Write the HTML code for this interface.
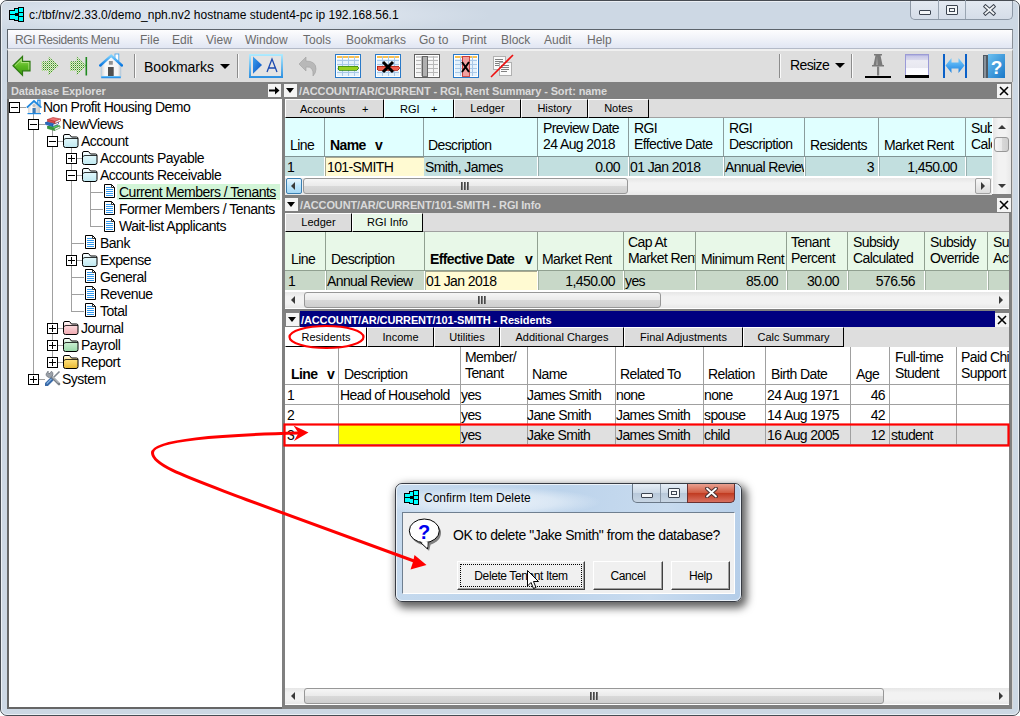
<!DOCTYPE html><html><head><meta charset="utf-8"><style>
*{box-sizing:border-box;margin:0;padding:0}
html,body{width:1020px;height:716px;overflow:hidden;background:#fff}
body{position:relative;font-family:"Liberation Sans",sans-serif;white-space:nowrap}
.a{position:absolute}
.t{position:absolute;line-height:1}
.btn{position:absolute;width:14px;height:14px;background:#f4f4f4}
.dd{position:absolute;left:3px;top:5px;width:0;height:0;border-left:4px solid transparent;border-right:4px solid transparent;border-top:5px solid #000}
.ptitle{position:absolute;font:bold 11px "Liberation Sans";letter-spacing:-0.12px;color:#dadada;line-height:12px}
.tab{position:absolute;height:19px;background:#dcdcdc;border-top:1px solid #fff;border-left:1px solid #fff;border-right:1px solid #000;border-bottom:1px solid #000;font-size:11px;line-height:17px;text-align:center;color:#000}
.g{position:absolute;font-size:14px;letter-spacing:-0.6px;line-height:16px;color:#000}
.tr{position:absolute;font-size:14px;letter-spacing:-0.5px;line-height:16px;color:#000}
.mn{position:absolute;font-size:12px;letter-spacing:-0.4px;line-height:14px;color:#6b6b6b;top:33px}
.ln{position:absolute;background:#a0a0a0}
</style></head><body>
<div class="a" style="left:0;top:0;width:1020px;height:716px;background:#cdd8e4;border:1px solid #474c53;border-radius:7px 7px 7px 7px"></div>
<div class="a" style="left:1px;top:1px;width:560px;height:28px;border-radius:6px 0 0 0;background:radial-gradient(ellipse 280px 22px at 210px 14px,#dde5ee 0,#dae2ec 60%,rgba(205,216,228,0) 100%)"></div>
<div class="a" style="left:1px;top:1px;width:1018px;height:714px;border:1px solid rgba(255,255,255,0.6);border-radius:6px"></div>
<svg class="a" style="left:9px;top:7px" width="15" height="15" viewBox="0 0 15 15" shape-rendering="crispEdges">
<rect x="0" y="3" width="15" height="10" fill="#000"/><rect x="5" y="1" width="10" height="13" fill="#000"/><rect x="9" y="0" width="6" height="15" fill="#000"/>
<rect x="1" y="4" width="5" height="3" fill="#0ff"/><rect x="1" y="8" width="5" height="4" fill="#0ff"/>
<rect x="6" y="2" width="3" height="4" fill="#0ff"/><rect x="6" y="9" width="3" height="4" fill="#0ff"/>
<rect x="10" y="1" width="4" height="4" fill="#0ff"/><rect x="10" y="6" width="4" height="3" fill="#0ff"/><rect x="10" y="10" width="4" height="4" fill="#0ff"/>
</svg>
<div class="t" style="left:29px;top:8px;font-size:12px;color:#000;line-height:14px">c:/tbf/nv/2.33.0/demo_nph.nv2 hostname student4-pc ip 192.168.56.1</div>
<div class="a" style="left:910px;top:1px;width:103px;height:19px;border:1px solid #8d98a6;border-top:none;border-radius:0 0 5px 5px;background:linear-gradient(#e3e9f1,#d5dde8)"></div>
<div class="a" style="left:938px;top:0;width:1px;height:19px;background:#9aa5b2"></div>
<div class="a" style="left:965px;top:0;width:1px;height:19px;background:#9aa5b2"></div>
<div class="a" style="left:919px;top:10px;width:12px;height:5px;background:#f4f6f8;border:1px solid #3c4450;border-radius:1px"></div>
<div class="a" style="left:946px;top:5px;width:12px;height:10px;background:#f4f6f8;border:1px solid #3c4450;border-radius:1px"></div>
<div class="a" style="left:949px;top:8px;width:6px;height:4px;border:1px solid #3c4450"></div>
<svg class="a" style="left:983px;top:4px" width="13" height="12" viewBox="0 0 13 12"><path d="M2.5,2.5 L10.5,9.5 M10.5,2.5 L2.5,9.5" stroke="#3c4450" stroke-width="3.8" stroke-linecap="square"/><path d="M2.5,2.5 L10.5,9.5 M10.5,2.5 L2.5,9.5" stroke="#f4f6f8" stroke-width="1.8" stroke-linecap="square"/></svg>
<div class="a" style="left:7px;top:29px;width:1006px;height:20px;border-top:1px solid #5c636b;border-left:1px solid #5c636b;border-right:1px solid #8a9098;background:linear-gradient(#fdfdfe,#f1f3f9 45%,#e1e6f3);border-bottom:1px solid #b4bac8"></div>
<div class="mn" style="left:15px;letter-spacing:-0.4px">RGI Residents Menu</div>
<div class="mn" style="left:140px;letter-spacing:0px">File</div>
<div class="mn" style="left:172px;letter-spacing:0px">Edit</div>
<div class="mn" style="left:206px;letter-spacing:0px">View</div>
<div class="mn" style="left:245px;letter-spacing:0px">Window</div>
<div class="mn" style="left:303px;letter-spacing:0px">Tools</div>
<div class="mn" style="left:346px;letter-spacing:0px">Bookmarks</div>
<div class="mn" style="left:419px;letter-spacing:0px">Go to</div>
<div class="mn" style="left:462px;letter-spacing:0px">Print</div>
<div class="mn" style="left:501px;letter-spacing:0px">Block</div>
<div class="mn" style="left:544px;letter-spacing:0px">Audit</div>
<div class="mn" style="left:587px;letter-spacing:0px">Help</div>
<div class="a" style="left:7px;top:49px;width:1006px;height:33px;background:#dedede;border-top:2px solid #f0f0f0;border-left:1px solid #5c636b;border-right:1px solid #a0a0a0"></div>
<div class="a" style="left:134px;top:54px;width:2px;height:24px;border-left:1px solid #8c8c8c;border-right:1px solid #fafafa"></div>
<div class="a" style="left:237px;top:54px;width:2px;height:24px;border-left:1px solid #8c8c8c;border-right:1px solid #fafafa"></div>
<div class="a" style="left:779px;top:54px;width:2px;height:24px;border-left:1px solid #8c8c8c;border-right:1px solid #fafafa"></div>
<div class="a" style="left:851px;top:54px;width:2px;height:24px;border-left:1px solid #8c8c8c;border-right:1px solid #fafafa"></div>
<div class="t" style="left:144px;top:59px;font-size:14px;line-height:16px;color:#000">Bookmarks</div>
<div class="a" style="left:220px;top:64px;width:0;height:0;border-left:5px solid transparent;border-right:5px solid transparent;border-top:5px solid #000"></div>
<div class="t" style="left:790px;top:57px;font-size:14px;letter-spacing:-0.6px;line-height:16px;color:#000">Resize</div>
<div class="a" style="left:835px;top:63px;width:0;height:0;border-left:5px solid transparent;border-right:5px solid transparent;border-top:5px solid #000"></div>
<svg class="a" style="left:12px;top:55px" width="20" height="22" viewBox="0 0 20 22"><defs><linearGradient id="gr1" x1="0" y1="0" x2="0" y2="1"><stop offset="0" stop-color="#a8e070"/><stop offset="0.5" stop-color="#5cba22"/><stop offset="1" stop-color="#3c9810"/></linearGradient></defs><path d="M1,10.7 L10.5,1.5 V6.3 H18 V15.8 H10.5 V20.2 Z" fill="url(#gr1)" stroke="#2d7a12" stroke-width="1.2" stroke-linejoin="miter"/><path d="M3,10.7 L9.3,4.5 V7.5 H16.8 V14.6" fill="none" stroke="#c8f0a0" stroke-width="0.8" opacity="0.8"/></svg>
<svg class="a" style="left:41px;top:55px" width="20" height="22" viewBox="0 0 20 22"><defs><pattern id="dot" width="2" height="2" patternUnits="userSpaceOnUse"><rect width="1" height="1" fill="#3a9a18"/><rect x="1" y="1" width="1" height="1" fill="#98d868"/></pattern></defs><path d="M0.8,6.3 H7.4 V1.5 L18,10.7 L7.4,20.2 V15.8 H0.8 Z" fill="url(#dot)"/></svg>
<svg class="a" style="left:69px;top:55px" width="20" height="22" viewBox="0 0 20 22"><path d="M1,6.3 H7.7 V1.5 L17,10.7 L7.7,20.2 V15.8 H1 Z" fill="url(#dot)"/><rect x="16.5" y="2" width="1.6" height="18.5" fill="#1f8a1f"/></svg>
<svg class="a" style="left:99px;top:53px" width="24" height="26" viewBox="0 0 24 26"><defs><linearGradient id="hw" x1="0" y1="0" x2="1" y2="0"><stop offset="0" stop-color="#d0d0d0"/><stop offset="0.2" stop-color="#f8f8f8"/><stop offset="0.85" stop-color="#f4f4f4"/><stop offset="1" stop-color="#c8c8c8"/></linearGradient><linearGradient id="hr" x1="0" y1="0" x2="0" y2="1"><stop offset="0" stop-color="#7ad0ff"/><stop offset="1" stop-color="#0a78e0"/></linearGradient></defs><rect x="16" y="1" width="3.8" height="7" fill="#fff" stroke="#3aa0f0" stroke-width="0.8"/><path d="M2.2,12 L12.2,3.5 L21.8,12 V24 H2.2 Z" fill="url(#hw)" stroke="#a0c8e8" stroke-width="0.6"/><rect x="9.9" y="8" width="3.9" height="3.7" fill="#909090"/><rect x="9" y="14" width="5.7" height="9.5" fill="#505050"/><rect x="2.2" y="23" width="19.6" height="2.2" fill="url(#hr)"/><path d="M1.2,12.5 L12.2,2.6 L23,12.5" fill="none" stroke="url(#hr)" stroke-width="2.4" stroke-linecap="round" stroke-linejoin="round"/></svg>
<svg class="a" style="left:249px;top:54px" width="34" height="24" viewBox="0 0 34 24"><defs><linearGradient id="pab" x1="0" y1="0" x2="0" y2="1"><stop offset="0" stop-color="#b0ecff"/><stop offset="1" stop-color="#2a8ee0"/></linearGradient><linearGradient id="pat" x1="0" y1="0" x2="1" y2="1"><stop offset="0" stop-color="#3aa0f0"/><stop offset="1" stop-color="#0a50c0"/></linearGradient></defs><rect x="0" y="0" width="34" height="24" fill="url(#pab)"/><rect x="2" y="2" width="30" height="20" fill="#e4e4e4"/><path d="M4,2.6 L13,11 L4,19.8 Z" fill="url(#pat)"/><path d="M18,18 L23,5 L28,18 M19.6,14 H26.4" fill="none" stroke="#1a4ab0" stroke-width="1.3"/></svg>
<svg class="a" style="left:298px;top:56px" width="20" height="21" viewBox="0 0 20 21"><path d="M1,8 L8,1 V5 Q18,5 18,13 Q18,17 15,20 Q16,10 8,11 V15 Z" fill="#b8b8b8" stroke="#a0a0a0" stroke-width="0.6"/></svg>
<svg class="a" style="left:335px;top:54px" width="26" height="24" viewBox="0 0 26 24" shape-rendering="crispEdges"><rect x="0.5" y="0.5" width="25" height="23" fill="#fff" stroke="#2a7ac8"/><rect x="2" y="5" width="22" height="17" fill="#e4f2fc"/><rect x="2" y="2" width="22" height="2" fill="#f8c050"/><rect x="2" y="6" width="22" height="1" fill="#a8c8e8"/><rect x="2" y="10" width="22" height="1" fill="#a8c8e8"/><rect x="2" y="14" width="22" height="1" fill="#a8c8e8"/><rect x="2" y="18" width="22" height="1" fill="#a8c8e8"/><rect x="7" y="2" width="1" height="20" fill="#a8c8e8"/><rect x="13" y="2" width="1" height="20" fill="#a8c8e8"/><rect x="19" y="2" width="1" height="20" fill="#a8c8e8"/><rect x="3" y="12" width="20" height="4" rx="1" fill="#98d020" stroke="#3a8a10" stroke-width="0.8"/></svg>
<svg class="a" style="left:375px;top:54px" width="26" height="24" viewBox="0 0 26 24" shape-rendering="crispEdges"><rect x="0.5" y="0.5" width="25" height="23" fill="#fff" stroke="#2a7ac8"/><rect x="2" y="5" width="22" height="17" fill="#e4f2fc"/><rect x="2" y="2" width="22" height="2" fill="#f8c050"/><rect x="2" y="6" width="22" height="1" fill="#a8c8e8"/><rect x="2" y="10" width="22" height="1" fill="#a8c8e8"/><rect x="2" y="14" width="22" height="1" fill="#a8c8e8"/><rect x="2" y="18" width="22" height="1" fill="#a8c8e8"/><rect x="7" y="2" width="1" height="20" fill="#a8c8e8"/><rect x="13" y="2" width="1" height="20" fill="#a8c8e8"/><rect x="19" y="2" width="1" height="20" fill="#a8c8e8"/><rect x="2" y="12" width="22" height="4" rx="1" fill="#f06050" stroke="#b02010" stroke-width="0.8"/><path d="M8,8 L18,18 M18,8 L8,18" stroke="#000" stroke-width="3" shape-rendering="auto"/></svg>
<svg class="a" style="left:414px;top:54px" width="26" height="24" viewBox="0 0 26 24" shape-rendering="crispEdges"><rect x="0.5" y="0.5" width="25" height="23" fill="#fff" stroke="#606060"/><rect x="2" y="5" width="22" height="17" fill="#f4f4f4"/><rect x="2" y="2" width="22" height="2" fill="#d0d0d0"/><rect x="2" y="6" width="22" height="1" fill="#b8b8b8"/><rect x="2" y="10" width="22" height="1" fill="#b8b8b8"/><rect x="2" y="14" width="22" height="1" fill="#b8b8b8"/><rect x="2" y="18" width="22" height="1" fill="#b8b8b8"/><rect x="7" y="2" width="1" height="20" fill="#b8b8b8"/><rect x="13" y="2" width="1" height="20" fill="#b8b8b8"/><rect x="19" y="2" width="1" height="20" fill="#b8b8b8"/><rect x="8" y="2" width="5" height="20" fill="#b0b0b0" stroke="#505050" stroke-width="0.8"/></svg>
<svg class="a" style="left:453px;top:54px" width="26" height="24" viewBox="0 0 26 24" shape-rendering="crispEdges"><rect x="0.5" y="0.5" width="25" height="23" fill="#fff" stroke="#2a7ac8"/><rect x="2" y="5" width="22" height="17" fill="#e4f2fc"/><rect x="2" y="2" width="22" height="2" fill="#f8c050"/><rect x="2" y="6" width="22" height="1" fill="#a8c8e8"/><rect x="2" y="10" width="22" height="1" fill="#a8c8e8"/><rect x="2" y="14" width="22" height="1" fill="#a8c8e8"/><rect x="2" y="18" width="22" height="1" fill="#a8c8e8"/><rect x="7" y="2" width="1" height="20" fill="#a8c8e8"/><rect x="13" y="2" width="1" height="20" fill="#a8c8e8"/><rect x="19" y="2" width="1" height="20" fill="#a8c8e8"/><rect x="9" y="2" width="7" height="20" fill="#f0a0a0" stroke="#c02020" stroke-width="0.8"/><path d="M9,8 L16,18 M16,8 L9,18" stroke="#000" stroke-width="2" shape-rendering="auto"/></svg>
<svg class="a" style="left:490px;top:54px" width="25" height="24" viewBox="0 0 25 24" shape-rendering="crispEdges"><rect x="3.5" y="2.5" width="12" height="13" fill="#fafafa" stroke="#b0b0b0"/><path d="M5,5.5 H13 M5,7.5 H13 M5,9.5 H13 M5,11.5 H11" stroke="#808080"/><rect x="9.5" y="8.5" width="12" height="13" fill="#fafafa" stroke="#b0b0b0"/><path d="M11,11.5 H19 M11,13.5 H19 M11,15.5 H19 M11,17.5 H17" stroke="#808080"/><path d="M1,23 L23,1" stroke="#ee1010" stroke-width="1.6" shape-rendering="auto"/></svg>
<svg class="a" style="left:865px;top:54px" width="26" height="24" viewBox="0 0 26 24"><path d="M9,0 H17 V1.5 H15.5 L17.5,11 H19 V12.5 H7 V11 H8.5 L10.5,1.5 H9 Z" fill="#7a7a7a"/><path d="M12,2 L11,11 H13 Z" fill="#a0a0a0"/><rect x="12" y="12.5" width="2.2" height="9" fill="#808080"/><rect x="0" y="22" width="26" height="2" fill="#000"/></svg>
<svg class="a" style="left:905px;top:54px" width="24" height="24" viewBox="0 0 24 24"><defs><linearGradient id="wg" x1="0" y1="0" x2="0" y2="1"><stop offset="0" stop-color="#8e8ed0"/><stop offset="0.1" stop-color="#c8c8e8"/><stop offset="0.25" stop-color="#d8d8ec"/><stop offset="0.3" stop-color="#ececf4"/><stop offset="0.62" stop-color="#e8e8f0"/><stop offset="0.66" stop-color="#fafaff"/><stop offset="1" stop-color="#ffffff"/></linearGradient></defs><rect x="0" y="0" width="24" height="22" fill="url(#wg)"/><rect x="0" y="0" width="1" height="22" fill="#9a9ad8"/><rect x="23" y="0" width="1" height="22" fill="#9a9ad8"/><rect x="0" y="21" width="24" height="3" fill="#000"/></svg>
<svg class="a" style="left:943px;top:54px" width="25" height="24" viewBox="0 0 25 24"><defs><linearGradient id="ag" x1="0" y1="0" x2="0" y2="1"><stop offset="0" stop-color="#7cd0ff"/><stop offset="1" stop-color="#1a80e0"/></linearGradient></defs><rect x="0" y="0" width="2" height="24" fill="#0a60c8"/><rect x="22" y="0" width="2" height="24" fill="#0a60c8"/><path d="M2.5,11.5 L8.5,4 V8.5 H15.5 V4 L21.5,11.5 L15.5,19 V14.5 H8.5 V19 Z" fill="url(#ag)"/></svg>
<svg class="a" style="left:983px;top:54px" width="22" height="24" viewBox="0 0 22 24"><defs><linearGradient id="bg" x1="0" y1="0" x2="1" y2="1"><stop offset="0" stop-color="#6cc0f0"/><stop offset="1" stop-color="#1a78c8"/></linearGradient></defs><rect x="0" y="1" width="5" height="23" fill="#505a64"/><rect x="1.5" y="2" width="1" height="22" fill="#c0c8d0"/><rect x="5" y="0" width="17" height="24" fill="url(#bg)"/><text x="13.5" y="20" font-family="Liberation Sans" font-weight="bold" font-size="19" fill="#fff" text-anchor="middle">?</text></svg>
<div class="a" style="left:7px;top:82px;width:276px;height:17px;background:#808080"></div>
<div class="ptitle" style="left:11px;top:85px">Database Explorer</div>
<div class="btn" style="left:268px;top:84px;width:13px;height:13px"></div>
<svg class="a" style="left:269px;top:86px" width="11" height="9" viewBox="0 0 11 9"><path d="M0,3.5 H6 V0.5 L10.5,4.5 L6,8.5 V5.5 H0 Z" fill="#000"/></svg>
<div class="a" style="left:7px;top:99px;width:276px;height:610px;background:#fff;border-left:2px solid #666;border-bottom:2px solid #666"></div>
<div class="ln" style="left:33px;top:113px;width:1px;height:266px"></div>
<div class="ln" style="left:52px;top:130px;width:1px;height:232px"></div>
<div class="ln" style="left:71px;top:147px;width:1px;height:164px"></div>
<div class="ln" style="left:90px;top:181px;width:1px;height:45px"></div>
<div class="ln" style="left:20px;top:107px;width:6px;height:1px"></div>
<div class="a" style="left:9px;top:102px;width:11px;height:11px;border:1px solid #000;background:#fff"></div><div class="a" style="left:11px;top:107px;width:7px;height:1px;background:#000"></div>
<svg class="a" style="left:26px;top:99px" width="17" height="16" viewBox="0 0 17 16"><defs><linearGradient id="hwl" x1="0" y1="0" x2="1" y2="0"><stop offset="0" stop-color="#d8d8d8"/><stop offset="0.3" stop-color="#fafafa"/><stop offset="1" stop-color="#c8c8c8"/></linearGradient></defs><path d="M2,8 L8,3 L14,8 V14.5 H2 Z" fill="url(#hwl)"/><circle cx="8" cy="6.5" r="1.6" fill="#c0c0c0"/><rect x="6.5" y="9" width="3.2" height="5.5" fill="#3a7ab8"/><rect x="1.5" y="14" width="13.5" height="1.2" fill="#1e88e0"/><path d="M0.8,8.6 L8,2 L15.4,8.6" fill="none" stroke="#1e88e0" stroke-width="1.8"/><path d="M11.8,5 V1.2 H14 V7" fill="none" stroke="#1e88e0" stroke-width="1.2"/></svg>
<div class="tr" style="left:43px;top:99px">Non Profit Housing Demo</div>
<div class="ln" style="left:39px;top:124px;width:6px;height:1px"></div>
<div class="a" style="left:28px;top:119px;width:11px;height:11px;border:1px solid #000;background:#fff"></div><div class="a" style="left:30px;top:124px;width:7px;height:1px;background:#000"></div>
<svg class="a" style="left:45px;top:117px" width="16" height="14" viewBox="0 0 16 14"><path d="M2.5,9.5 L8,7.5 L15,9 L9.5,11.5 Z" fill="#58c860" stroke="#2a7a2a" stroke-width="0.6"/><path d="M2.5,9.5 L9.5,11.5 V13.5 L2.5,11.5 Z" fill="#38a040" stroke="#2a7a2a" stroke-width="0.6"/><path d="M9.5,11.5 L15,9 V11 L9.5,13.5 Z" fill="#fff" stroke="#2a7a2a" stroke-width="0.6"/><path d="M0.5,5.5 L6,3.5 L13.5,5 L8,7.5 Z" fill="#3a88e0" stroke="#1a50a0" stroke-width="0.6"/><path d="M0.5,5.5 L8,7.5 V9.5 L0.5,7.5 Z" fill="#2a70c8" stroke="#1a50a0" stroke-width="0.6"/><path d="M8,7.5 L13.5,5 V7 L8,9.5 Z" fill="#fff" stroke="#1a50a0" stroke-width="0.6"/><path d="M2.5,2.5 L8,0.5 L15.5,2 L10,4.5 Z" fill="#f07070" stroke="#b03030" stroke-width="0.6"/><path d="M2.5,2.5 L10,4.5 V6.5 L2.5,4.5 Z" fill="#e05050" stroke="#b03030" stroke-width="0.6"/><path d="M10,4.5 L15.5,2 V4 L10,6.5 Z" fill="#fff" stroke="#b03030" stroke-width="0.6"/></svg>
<div class="tr" style="left:62px;top:116px">NewViews</div>
<div class="ln" style="left:58px;top:141px;width:6px;height:1px"></div>
<div class="a" style="left:47px;top:136px;width:11px;height:11px;border:1px solid #000;background:#fff"></div><div class="a" style="left:49px;top:141px;width:7px;height:1px;background:#000"></div>
<svg class="a" style="left:63px;top:134px" width="16" height="14" viewBox="0 0 16 14"><defs><linearGradient id="fgdff7fb" x1="0" y1="0" x2="0" y2="1"><stop offset="0" stop-color="#fff"/><stop offset="0.35" stop-color="#dff7fb"/><stop offset="1" stop-color="#bfe8f0"/></linearGradient></defs><path d="M0.5,11.5 V2 Q0.5,0.5 2,0.5 H6.5 L8.5,3 H13.5 Q15,3 15,4.5 V11.5 Q15,13.5 13,13.5 H2.5 Q0.5,13.5 0.5,11.5 Z" fill="url(#fgdff7fb)" stroke="#000" stroke-width="1"/><path d="M1,5.5 Q2,4.5 3,4.5 H15" fill="none" stroke="#000" stroke-width="0.8"/></svg>
<div class="tr" style="left:81px;top:133px">Account</div>
<div class="ln" style="left:77px;top:158px;width:6px;height:1px"></div>
<div class="a" style="left:66px;top:153px;width:11px;height:11px;border:1px solid #000;background:#fff"></div><div class="a" style="left:68px;top:158px;width:7px;height:1px;background:#000"></div><div class="a" style="left:71px;top:155px;width:1px;height:7px;background:#000"></div>
<svg class="a" style="left:82px;top:151px" width="16" height="14" viewBox="0 0 16 14"><defs><linearGradient id="fgdff7fb" x1="0" y1="0" x2="0" y2="1"><stop offset="0" stop-color="#fff"/><stop offset="0.35" stop-color="#dff7fb"/><stop offset="1" stop-color="#bfe8f0"/></linearGradient></defs><path d="M0.5,11.5 V2 Q0.5,0.5 2,0.5 H6.5 L8.5,3 H13.5 Q15,3 15,4.5 V11.5 Q15,13.5 13,13.5 H2.5 Q0.5,13.5 0.5,11.5 Z" fill="url(#fgdff7fb)" stroke="#000" stroke-width="1"/><path d="M1,5.5 Q2,4.5 3,4.5 H15" fill="none" stroke="#000" stroke-width="0.8"/></svg>
<div class="tr" style="left:100px;top:150px">Accounts Payable</div>
<div class="ln" style="left:77px;top:175px;width:6px;height:1px"></div>
<div class="a" style="left:66px;top:170px;width:11px;height:11px;border:1px solid #000;background:#fff"></div><div class="a" style="left:68px;top:175px;width:7px;height:1px;background:#000"></div>
<svg class="a" style="left:82px;top:168px" width="16" height="14" viewBox="0 0 16 14"><defs><linearGradient id="fgdff7fb" x1="0" y1="0" x2="0" y2="1"><stop offset="0" stop-color="#fff"/><stop offset="0.35" stop-color="#dff7fb"/><stop offset="1" stop-color="#bfe8f0"/></linearGradient></defs><path d="M0.5,11.5 V2 Q0.5,0.5 2,0.5 H6.5 L8.5,3 H13.5 Q15,3 15,4.5 V11.5 Q15,13.5 13,13.5 H2.5 Q0.5,13.5 0.5,11.5 Z" fill="url(#fgdff7fb)" stroke="#000" stroke-width="1"/><path d="M1,5.5 Q2,4.5 3,4.5 H15" fill="none" stroke="#000" stroke-width="0.8"/></svg>
<div class="tr" style="left:100px;top:167px">Accounts Receivable</div>
<div class="ln" style="left:90px;top:192px;width:13px;height:1px"></div>
<div class="a" style="left:117px;top:184px;width:163px;height:16px;background:#d2f5d7"></div>
<svg class="a" style="left:104px;top:184px" width="11" height="14" viewBox="0 0 11 14"><path d="M0.5,0.5 H7.5 L10.5,3.5 V13.5 H0.5 Z" fill="#fff" stroke="#000"/><path d="M7.5,0.5 V3.5 H10.5" fill="none" stroke="#000" stroke-width="0.8"/><rect x="2" y="3" width="5" height="1" fill="#3399ee"/><rect x="2" y="5" width="7" height="1" fill="#3399ee"/><rect x="2" y="7" width="7" height="1" fill="#3399ee"/><rect x="2" y="9" width="7" height="1" fill="#3399ee"/><rect x="2" y="11" width="7" height="1" fill="#3399ee"/></svg>
<div class="tr" style="left:119px;top:184px;text-decoration:underline">Current Members / Tenants</div>
<div class="ln" style="left:90px;top:209px;width:13px;height:1px"></div>
<svg class="a" style="left:104px;top:201px" width="11" height="14" viewBox="0 0 11 14"><path d="M0.5,0.5 H7.5 L10.5,3.5 V13.5 H0.5 Z" fill="#fff" stroke="#000"/><path d="M7.5,0.5 V3.5 H10.5" fill="none" stroke="#000" stroke-width="0.8"/><rect x="2" y="3" width="5" height="1" fill="#3399ee"/><rect x="2" y="5" width="7" height="1" fill="#3399ee"/><rect x="2" y="7" width="7" height="1" fill="#3399ee"/><rect x="2" y="9" width="7" height="1" fill="#3399ee"/><rect x="2" y="11" width="7" height="1" fill="#3399ee"/></svg>
<div class="tr" style="left:119px;top:201px">Former Members / Tenants</div>
<div class="ln" style="left:90px;top:226px;width:13px;height:1px"></div>
<svg class="a" style="left:104px;top:218px" width="11" height="14" viewBox="0 0 11 14"><path d="M0.5,0.5 H7.5 L10.5,3.5 V13.5 H0.5 Z" fill="#fff" stroke="#000"/><path d="M7.5,0.5 V3.5 H10.5" fill="none" stroke="#000" stroke-width="0.8"/><rect x="2" y="3" width="5" height="1" fill="#3399ee"/><rect x="2" y="5" width="7" height="1" fill="#3399ee"/><rect x="2" y="7" width="7" height="1" fill="#3399ee"/><rect x="2" y="9" width="7" height="1" fill="#3399ee"/><rect x="2" y="11" width="7" height="1" fill="#3399ee"/></svg>
<div class="tr" style="left:119px;top:218px">Wait-list Applicants</div>
<div class="ln" style="left:71px;top:243px;width:13px;height:1px"></div>
<svg class="a" style="left:85px;top:235px" width="11" height="14" viewBox="0 0 11 14"><path d="M0.5,0.5 H7.5 L10.5,3.5 V13.5 H0.5 Z" fill="#fff" stroke="#000"/><path d="M7.5,0.5 V3.5 H10.5" fill="none" stroke="#000" stroke-width="0.8"/><rect x="2" y="3" width="5" height="1" fill="#3399ee"/><rect x="2" y="5" width="7" height="1" fill="#3399ee"/><rect x="2" y="7" width="7" height="1" fill="#3399ee"/><rect x="2" y="9" width="7" height="1" fill="#3399ee"/><rect x="2" y="11" width="7" height="1" fill="#3399ee"/></svg>
<div class="tr" style="left:100px;top:235px">Bank</div>
<div class="ln" style="left:77px;top:260px;width:6px;height:1px"></div>
<div class="a" style="left:66px;top:255px;width:11px;height:11px;border:1px solid #000;background:#fff"></div><div class="a" style="left:68px;top:260px;width:7px;height:1px;background:#000"></div><div class="a" style="left:71px;top:257px;width:1px;height:7px;background:#000"></div>
<svg class="a" style="left:82px;top:253px" width="16" height="14" viewBox="0 0 16 14"><defs><linearGradient id="fgdff7fb" x1="0" y1="0" x2="0" y2="1"><stop offset="0" stop-color="#fff"/><stop offset="0.35" stop-color="#dff7fb"/><stop offset="1" stop-color="#bfe8f0"/></linearGradient></defs><path d="M0.5,11.5 V2 Q0.5,0.5 2,0.5 H6.5 L8.5,3 H13.5 Q15,3 15,4.5 V11.5 Q15,13.5 13,13.5 H2.5 Q0.5,13.5 0.5,11.5 Z" fill="url(#fgdff7fb)" stroke="#000" stroke-width="1"/><path d="M1,5.5 Q2,4.5 3,4.5 H15" fill="none" stroke="#000" stroke-width="0.8"/></svg>
<div class="tr" style="left:100px;top:252px">Expense</div>
<div class="ln" style="left:71px;top:277px;width:13px;height:1px"></div>
<svg class="a" style="left:85px;top:269px" width="11" height="14" viewBox="0 0 11 14"><path d="M0.5,0.5 H7.5 L10.5,3.5 V13.5 H0.5 Z" fill="#fff" stroke="#000"/><path d="M7.5,0.5 V3.5 H10.5" fill="none" stroke="#000" stroke-width="0.8"/><rect x="2" y="3" width="5" height="1" fill="#3399ee"/><rect x="2" y="5" width="7" height="1" fill="#3399ee"/><rect x="2" y="7" width="7" height="1" fill="#3399ee"/><rect x="2" y="9" width="7" height="1" fill="#3399ee"/><rect x="2" y="11" width="7" height="1" fill="#3399ee"/></svg>
<div class="tr" style="left:100px;top:269px">General</div>
<div class="ln" style="left:71px;top:294px;width:13px;height:1px"></div>
<svg class="a" style="left:85px;top:286px" width="11" height="14" viewBox="0 0 11 14"><path d="M0.5,0.5 H7.5 L10.5,3.5 V13.5 H0.5 Z" fill="#fff" stroke="#000"/><path d="M7.5,0.5 V3.5 H10.5" fill="none" stroke="#000" stroke-width="0.8"/><rect x="2" y="3" width="5" height="1" fill="#3399ee"/><rect x="2" y="5" width="7" height="1" fill="#3399ee"/><rect x="2" y="7" width="7" height="1" fill="#3399ee"/><rect x="2" y="9" width="7" height="1" fill="#3399ee"/><rect x="2" y="11" width="7" height="1" fill="#3399ee"/></svg>
<div class="tr" style="left:100px;top:286px">Revenue</div>
<div class="ln" style="left:71px;top:311px;width:13px;height:1px"></div>
<svg class="a" style="left:85px;top:303px" width="11" height="14" viewBox="0 0 11 14"><path d="M0.5,0.5 H7.5 L10.5,3.5 V13.5 H0.5 Z" fill="#fff" stroke="#000"/><path d="M7.5,0.5 V3.5 H10.5" fill="none" stroke="#000" stroke-width="0.8"/><rect x="2" y="3" width="5" height="1" fill="#3399ee"/><rect x="2" y="5" width="7" height="1" fill="#3399ee"/><rect x="2" y="7" width="7" height="1" fill="#3399ee"/><rect x="2" y="9" width="7" height="1" fill="#3399ee"/><rect x="2" y="11" width="7" height="1" fill="#3399ee"/></svg>
<div class="tr" style="left:100px;top:303px">Total</div>
<div class="ln" style="left:58px;top:328px;width:6px;height:1px"></div>
<div class="a" style="left:47px;top:323px;width:11px;height:11px;border:1px solid #000;background:#fff"></div><div class="a" style="left:49px;top:328px;width:7px;height:1px;background:#000"></div><div class="a" style="left:52px;top:325px;width:1px;height:7px;background:#000"></div>
<svg class="a" style="left:63px;top:321px" width="16" height="14" viewBox="0 0 16 14"><defs><linearGradient id="fgfbd7da" x1="0" y1="0" x2="0" y2="1"><stop offset="0" stop-color="#fff"/><stop offset="0.35" stop-color="#fbd7da"/><stop offset="1" stop-color="#f0a8b0"/></linearGradient></defs><path d="M0.5,11.5 V2 Q0.5,0.5 2,0.5 H6.5 L8.5,3 H13.5 Q15,3 15,4.5 V11.5 Q15,13.5 13,13.5 H2.5 Q0.5,13.5 0.5,11.5 Z" fill="url(#fgfbd7da)" stroke="#000" stroke-width="1"/><path d="M1,5.5 Q2,4.5 3,4.5 H15" fill="none" stroke="#000" stroke-width="0.8"/></svg>
<div class="tr" style="left:81px;top:320px">Journal</div>
<div class="ln" style="left:58px;top:345px;width:6px;height:1px"></div>
<div class="a" style="left:47px;top:340px;width:11px;height:11px;border:1px solid #000;background:#fff"></div><div class="a" style="left:49px;top:345px;width:7px;height:1px;background:#000"></div><div class="a" style="left:52px;top:342px;width:1px;height:7px;background:#000"></div>
<svg class="a" style="left:63px;top:338px" width="16" height="14" viewBox="0 0 16 14"><defs><linearGradient id="fgc8efd0" x1="0" y1="0" x2="0" y2="1"><stop offset="0" stop-color="#fff"/><stop offset="0.35" stop-color="#c8efd0"/><stop offset="1" stop-color="#98d8a8"/></linearGradient></defs><path d="M0.5,11.5 V2 Q0.5,0.5 2,0.5 H6.5 L8.5,3 H13.5 Q15,3 15,4.5 V11.5 Q15,13.5 13,13.5 H2.5 Q0.5,13.5 0.5,11.5 Z" fill="url(#fgc8efd0)" stroke="#000" stroke-width="1"/><path d="M1,5.5 Q2,4.5 3,4.5 H15" fill="none" stroke="#000" stroke-width="0.8"/></svg>
<div class="tr" style="left:81px;top:337px">Payroll</div>
<div class="ln" style="left:58px;top:362px;width:6px;height:1px"></div>
<div class="a" style="left:47px;top:357px;width:11px;height:11px;border:1px solid #000;background:#fff"></div><div class="a" style="left:49px;top:362px;width:7px;height:1px;background:#000"></div><div class="a" style="left:52px;top:359px;width:1px;height:7px;background:#000"></div>
<svg class="a" style="left:63px;top:355px" width="16" height="14" viewBox="0 0 16 14"><defs><linearGradient id="fgffe07a" x1="0" y1="0" x2="0" y2="1"><stop offset="0" stop-color="#fff"/><stop offset="0.35" stop-color="#ffe07a"/><stop offset="1" stop-color="#e8b830"/></linearGradient></defs><path d="M0.5,11.5 V2 Q0.5,0.5 2,0.5 H6.5 L8.5,3 H13.5 Q15,3 15,4.5 V11.5 Q15,13.5 13,13.5 H2.5 Q0.5,13.5 0.5,11.5 Z" fill="url(#fgffe07a)" stroke="#000" stroke-width="1"/><path d="M1,5.5 Q2,4.5 3,4.5 H15" fill="none" stroke="#000" stroke-width="0.8"/></svg>
<div class="tr" style="left:81px;top:354px">Report</div>
<div class="ln" style="left:39px;top:379px;width:6px;height:1px"></div>
<div class="a" style="left:28px;top:374px;width:11px;height:11px;border:1px solid #000;background:#fff"></div><div class="a" style="left:30px;top:379px;width:7px;height:1px;background:#000"></div><div class="a" style="left:33px;top:376px;width:1px;height:7px;background:#000"></div>
<svg class="a" style="left:45px;top:370px" width="16" height="16" viewBox="0 0 16 16"><path d="M9,7 L14.5,1.5" stroke="#808890" stroke-width="1.6"/><path d="M1.5,14.5 L7,9" stroke="#3a6aa8" stroke-width="4" stroke-linecap="round"/><path d="M1.8,13.6 L6.5,8.9" stroke="#8ab8e8" stroke-width="1.2"/><path d="M4.5,4.5 L14,14" stroke="#7a8088" stroke-width="2.6" stroke-linecap="round"/><path d="M4.8,4.2 L13.6,13" stroke="#d8dce0" stroke-width="0.9"/><path d="M1,4 A3.5,3.5 0 1 0 6.5,1.2 L4.5,3.5 L3,2.8 L3.2,1 Z" fill="#9aa0a8" stroke="#60666e" stroke-width="0.6"/></svg>
<div class="tr" style="left:62px;top:371px">System</div>
<div class="a" style="left:282px;top:82px;width:731px;height:627px;background:#808080;border-right:1px solid #d8d8d8"></div>
<div class="btn" style="left:284px;top:84px;width:13px;height:13px"><i class="dd" style="left:2px;top:4px"></i></div>
<div class="ptitle" style="left:299px;top:85px">/ACCOUNT/AR/CURRENT - RGI, Rent Summary - Sort: name</div>
<div class="btn" style="left:997px;top:84px;width:14px;height:14px"></div><svg class="a" style="left:999px;top:86px" width="10" height="10" viewBox="0 0 10 10"><path d="M1,1 L9,9 M9,1 L1,9" stroke="#000" stroke-width="1.6"/></svg>
<div class="a" style="left:285px;top:99px;width:726px;height:19px;background:#dedede;border-bottom:1px solid #a0a0a0"></div>
<div class="tab" style="left:285px;top:99px;width:99px"></div><div class="t" style="left:300px;top:103px;font-size:11px;line-height:12px">Accounts</div><div class="t" style="left:362px;top:103px;font-size:11px;line-height:12px">+</div>
<div class="tab" style="left:384px;top:99px;width:70px;background:#e0ffff"></div><div class="t" style="left:400px;top:103px;font-size:11px;line-height:12px">RGI</div><div class="t" style="left:431px;top:103px;font-size:11px;line-height:12px">+</div>
<div class="tab" style="left:454px;top:99px;width:67px">Ledger</div>
<div class="tab" style="left:521px;top:99px;width:67px">History</div>
<div class="tab" style="left:588px;top:99px;width:61px">Notes</div>
<div class="a" style="left:285px;top:118px;width:726px;height:76px;background:#fff"></div>
<div class="a" style="left:285px;top:118px;width:707px;height:39px;background:#e0ffff;border-bottom:1px solid #809494"></div>
<div class="a" style="left:285px;top:157px;width:707px;height:20px;background:#c2dfdf;border-bottom:1px solid #fff"></div>
<div class="a" style="left:325px;top:157px;width:99px;height:19px;background:#fffad2;border-left:1px solid #a8a890;border-top:1px solid #a8a890"></div>
<div class="a" style="left:324px;top:118px;width:1px;height:38px;background:#8a9c9c"></div>
<div class="a" style="left:423px;top:118px;width:1px;height:38px;background:#8a9c9c"></div>
<div class="a" style="left:537px;top:118px;width:1px;height:38px;background:#8a9c9c"></div>
<div class="a" style="left:537px;top:157px;width:1px;height:19px;background:#fff"></div><div class="a" style="left:538px;top:157px;width:1px;height:19px;background:#98b0b0"></div>
<div class="a" style="left:628px;top:118px;width:1px;height:38px;background:#8a9c9c"></div>
<div class="a" style="left:628px;top:157px;width:1px;height:19px;background:#fff"></div><div class="a" style="left:629px;top:157px;width:1px;height:19px;background:#98b0b0"></div>
<div class="a" style="left:723px;top:118px;width:1px;height:38px;background:#8a9c9c"></div>
<div class="a" style="left:723px;top:157px;width:1px;height:19px;background:#fff"></div><div class="a" style="left:724px;top:157px;width:1px;height:19px;background:#98b0b0"></div>
<div class="a" style="left:804px;top:118px;width:1px;height:38px;background:#8a9c9c"></div>
<div class="a" style="left:804px;top:157px;width:1px;height:19px;background:#fff"></div><div class="a" style="left:805px;top:157px;width:1px;height:19px;background:#98b0b0"></div>
<div class="a" style="left:878px;top:118px;width:1px;height:38px;background:#8a9c9c"></div>
<div class="a" style="left:878px;top:157px;width:1px;height:19px;background:#fff"></div><div class="a" style="left:879px;top:157px;width:1px;height:19px;background:#98b0b0"></div>
<div class="a" style="left:965px;top:118px;width:1px;height:38px;background:#8a9c9c"></div>
<div class="a" style="left:965px;top:157px;width:1px;height:19px;background:#fff"></div><div class="a" style="left:966px;top:157px;width:1px;height:19px;background:#98b0b0"></div>
<div class="a" style="left:324px;top:157px;width:1px;height:19px;background:#fff"></div>
<div class="g" style="left:290px;top:137px">Line</div>
<div class="g" style="left:330px;top:137px;font-weight:bold">Name</div><div class="g" style="left:375px;top:137px;font-weight:bold">v</div>
<div class="g" style="left:428px;top:137px">Description</div>
<div class="g" style="left:543px;top:120px">Preview Date<br>24 Aug 2018</div>
<div class="g" style="left:634px;top:120px">RGI<br>Effective Date</div>
<div class="g" style="left:729px;top:120px">RGI<br>Description</div>
<div class="g" style="left:810px;top:137px">Residents</div>
<div class="g" style="left:884px;top:137px">Market Rent</div>
<div class="a" style="left:966px;top:118px;width:26px;height:38px;overflow:hidden"><div class="g" style="left:5px;top:2px">Subsidy<br>Calculated</div></div>
<div class="g" style="left:287px;top:159px">1</div>
<div class="g" style="left:327px;top:159px">101-SMITH</div>
<div class="g" style="left:425px;top:159px">Smith, James</div>
<div class="g" style="left:538px;top:159px;width:82px;text-align:right">0.00</div>
<div class="g" style="left:630px;top:159px">01 Jan 2018</div>
<div class="a" style="left:724px;top:157px;width:80px;height:19px;overflow:hidden"><div class="g" style="left:1px;top:2px">Annual Review</div></div>
<div class="g" style="left:805px;top:159px;width:69px;text-align:right">3</div>
<div class="g" style="left:879px;top:159px;width:78px;text-align:right">1,450.00</div>

<div class="a" style="left:285px;top:178px;width:707px;height:17px;background:linear-gradient(#e6e6e6,#f2f2f2 30%,#f2f2f2 70%,#e8e8e8)"></div><div class="a" style="left:286px;top:178px;width:16px;height:16px;border:1px solid #3c7fb1;border-radius:2px;background:linear-gradient(#eaf6fd,#bee6fd 50%,#a7d9f5)"></div><div class="a" style="left:291px;top:182px;width:0;height:0;border-top:4px solid transparent;border-bottom:4px solid transparent;border-right:4px solid #3a3a3a"></div><div class="a" style="left:982px;top:182px;width:0;height:0;border-top:4px solid transparent;border-bottom:4px solid transparent;border-left:4px solid #3a3a3a"></div><div class="a" style="left:303px;top:178px;width:325px;height:16px;border:1px solid #979797;border-radius:3px;background:linear-gradient(#f6f6f6,#eaeaea 50%,#d9d9d9 51%,#cfcfcf)"></div><div class="a" style="left:461px;top:182px;width:2px;height:8px;background:linear-gradient(90deg,#303030,#909090)"></div><div class="a" style="left:464px;top:182px;width:2px;height:8px;background:linear-gradient(90deg,#303030,#909090)"></div><div class="a" style="left:467px;top:182px;width:2px;height:8px;background:linear-gradient(90deg,#303030,#909090)"></div>
<div class="a" style="left:975px;top:178px;width:16px;height:16px;border:1px solid #a0a0a0;border-radius:2px;background:linear-gradient(#f8f8f8,#dcdcdc)"></div><div class="a" style="left:981px;top:182px;width:0;height:0;border-top:4px solid transparent;border-bottom:4px solid transparent;border-left:4px solid #3a3a3a"></div>
<div class="a" style="left:993px;top:118px;width:18px;height:76px;background:linear-gradient(90deg,#e6e6e6,#f2f2f2 30%,#f2f2f2 70%,#e8e8e8)"></div>
<div class="a" style="left:998px;top:125px;width:0;height:0;border-left:4px solid transparent;border-right:4px solid transparent;border-bottom:4px solid #3a3a3a"></div>
<div class="a" style="left:998px;top:184px;width:0;height:0;border-left:4px solid transparent;border-right:4px solid transparent;border-top:4px solid #3a3a3a"></div>
<div class="a" style="left:994px;top:137px;width:15px;height:15px;border:1px solid #979797;border-radius:3px;background:linear-gradient(90deg,#f6f6f6,#eaeaea 50%,#d9d9d9 51%,#cfcfcf)"></div>
<div class="btn" style="left:285px;top:198px;width:13px;height:13px"><i class="dd" style="left:2px;top:4px"></i></div>
<div class="ptitle" style="left:300px;top:199px">/ACCOUNT/AR/CURRENT/101-SMITH - RGI Info</div>
<div class="btn" style="left:997px;top:198px;width:14px;height:14px"></div><svg class="a" style="left:999px;top:200px" width="10" height="10" viewBox="0 0 10 10"><path d="M1,1 L9,9 M9,1 L1,9" stroke="#000" stroke-width="1.6"/></svg>
<div class="a" style="left:285px;top:213px;width:724px;height:19px;background:#dedede;border-bottom:1px solid #a0a0a0"></div>
<div class="tab" style="left:285px;top:213px;width:67px">Ledger</div>
<div class="tab" style="left:352px;top:213px;width:71px;background:#e8f8e8">RGI Info</div>
<div class="a" style="left:285px;top:232px;width:724px;height:77px;background:#fff"></div>
<div class="a" style="left:285px;top:232px;width:724px;height:39px;background:#e8f8e8;border-bottom:1px solid #90a090"></div>
<div class="a" style="left:285px;top:271px;width:724px;height:20px;background:#c8d8c8;border-bottom:1px solid #fff"></div>
<div class="a" style="left:425px;top:271px;width:112px;height:19px;background:#fffad2;border-left:1px solid #a8a890;border-top:1px solid #a8a890"></div>
<div class="a" style="left:325px;top:232px;width:1px;height:38px;background:#90a090"></div>
<div class="a" style="left:325px;top:271px;width:1px;height:19px;background:#fff"></div><div class="a" style="left:326px;top:271px;width:1px;height:19px;background:#a0b0a0"></div>
<div class="a" style="left:424px;top:232px;width:1px;height:38px;background:#90a090"></div>
<div class="a" style="left:424px;top:271px;width:1px;height:19px;background:#fff"></div><div class="a" style="left:425px;top:271px;width:1px;height:19px;background:#a0b0a0"></div>
<div class="a" style="left:537px;top:232px;width:1px;height:38px;background:#90a090"></div>
<div class="a" style="left:537px;top:271px;width:1px;height:19px;background:#fff"></div><div class="a" style="left:538px;top:271px;width:1px;height:19px;background:#a0b0a0"></div>
<div class="a" style="left:623px;top:232px;width:1px;height:38px;background:#90a090"></div>
<div class="a" style="left:623px;top:271px;width:1px;height:19px;background:#fff"></div><div class="a" style="left:624px;top:271px;width:1px;height:19px;background:#a0b0a0"></div>
<div class="a" style="left:695px;top:232px;width:1px;height:38px;background:#90a090"></div>
<div class="a" style="left:695px;top:271px;width:1px;height:19px;background:#fff"></div><div class="a" style="left:696px;top:271px;width:1px;height:19px;background:#a0b0a0"></div>
<div class="a" style="left:786px;top:232px;width:1px;height:38px;background:#90a090"></div>
<div class="a" style="left:786px;top:271px;width:1px;height:19px;background:#fff"></div><div class="a" style="left:787px;top:271px;width:1px;height:19px;background:#a0b0a0"></div>
<div class="a" style="left:847px;top:232px;width:1px;height:38px;background:#90a090"></div>
<div class="a" style="left:847px;top:271px;width:1px;height:19px;background:#fff"></div><div class="a" style="left:848px;top:271px;width:1px;height:19px;background:#a0b0a0"></div>
<div class="a" style="left:924px;top:232px;width:1px;height:38px;background:#90a090"></div>
<div class="a" style="left:924px;top:271px;width:1px;height:19px;background:#fff"></div><div class="a" style="left:925px;top:271px;width:1px;height:19px;background:#a0b0a0"></div>
<div class="a" style="left:987px;top:232px;width:1px;height:38px;background:#90a090"></div>
<div class="a" style="left:987px;top:271px;width:1px;height:19px;background:#fff"></div><div class="a" style="left:988px;top:271px;width:1px;height:19px;background:#a0b0a0"></div>
<div class="g" style="left:291px;top:251px">Line</div>
<div class="g" style="left:331px;top:251px">Description</div>
<div class="g" style="left:430px;top:251px;font-weight:bold">Effective Date</div><div class="g" style="left:525px;top:251px;font-weight:bold">v</div>
<div class="g" style="left:542px;top:251px">Market Rent</div>
<div class="a" style="left:624px;top:232px;width:71px;height:38px;overflow:hidden"><div class="g" style="left:4px;top:2px">Cap At<br>Market Rent</div></div>
<div class="g" style="left:701px;top:251px">Minimum Rent</div>
<div class="g" style="left:791px;top:234px">Tenant<br>Percent</div>
<div class="g" style="left:853px;top:234px">Subsidy<br>Calculated</div>
<div class="g" style="left:930px;top:234px">Subsidy<br>Override</div>
<div class="a" style="left:988px;top:232px;width:21px;height:38px;overflow:hidden"><div class="g" style="left:5px;top:2px">Subsidy<br>Actual</div></div>
<div class="g" style="left:288px;top:273px">1</div>
<div class="g" style="left:327px;top:273px">Annual Review</div>
<div class="g" style="left:426px;top:273px">01 Jan 2018</div>
<div class="g" style="left:538px;top:273px;width:77px;text-align:right">1,450.00</div>
<div class="g" style="left:625px;top:273px">yes</div>
<div class="g" style="left:697px;top:273px;width:81px;text-align:right">85.00</div>
<div class="g" style="left:788px;top:273px;width:51px;text-align:right">30.00</div>
<div class="g" style="left:849px;top:273px;width:66px;text-align:right">576.56</div>

<div class="a" style="left:285px;top:292px;width:724px;height:16px;background:linear-gradient(#e6e6e6,#f2f2f2 30%,#f2f2f2 70%,#e8e8e8)"></div><div class="a" style="left:291px;top:296px;width:0;height:0;border-top:4px solid transparent;border-bottom:4px solid transparent;border-right:4px solid #3a3a3a"></div><div class="a" style="left:999px;top:296px;width:0;height:0;border-top:4px solid transparent;border-bottom:4px solid transparent;border-left:4px solid #3a3a3a"></div><div class="a" style="left:304px;top:292px;width:357px;height:16px;border:1px solid #979797;border-radius:3px;background:linear-gradient(#f6f6f6,#eaeaea 50%,#d9d9d9 51%,#cfcfcf)"></div><div class="a" style="left:478px;top:296px;width:2px;height:8px;background:linear-gradient(90deg,#303030,#909090)"></div><div class="a" style="left:481px;top:296px;width:2px;height:8px;background:linear-gradient(90deg,#303030,#909090)"></div><div class="a" style="left:484px;top:296px;width:2px;height:8px;background:linear-gradient(90deg,#303030,#909090)"></div>
<div class="a" style="left:300px;top:311px;width:695px;height:16px;background:#000080"></div>
<div class="btn" style="left:286px;top:313px;width:13px;height:13px"><i class="dd" style="left:2px;top:4px"></i></div>
<div class="ptitle" style="left:301px;top:314px;color:#fff">/ACCOUNT/AR/CURRENT/101-SMITH - Residents</div>
<div class="btn" style="left:995px;top:313px;width:14px;height:14px"></div><svg class="a" style="left:997px;top:315px" width="10" height="10" viewBox="0 0 10 10"><path d="M1,1 L9,9 M9,1 L1,9" stroke="#000" stroke-width="1.6"/></svg>
<div class="a" style="left:285px;top:327px;width:724px;height:378px;background:#fff"></div>
<div class="a" style="left:285px;top:327px;width:724px;height:20px;background:#dedede"></div>
<div class="tab" style="left:285px;top:327px;width:82px;height:20px;line-height:19px;background:#fff">Residents</div>
<div class="tab" style="left:367px;top:327px;width:67px;height:20px;line-height:19px">Income</div>
<div class="tab" style="left:434px;top:327px;width:66px;height:20px;line-height:19px">Utilities</div>
<div class="tab" style="left:500px;top:327px;width:124px;height:20px;line-height:19px">Additional Charges</div>
<div class="tab" style="left:624px;top:327px;width:119px;height:20px;line-height:19px">Final Adjustments</div>
<div class="tab" style="left:743px;top:327px;width:101px;height:20px;line-height:19px">Calc Summary</div>
<div class="a" style="left:285px;top:384px;width:724px;height:1px;background:#a0a0a0"></div>
<div class="a" style="left:285px;top:404px;width:724px;height:1px;background:#a0a0a0"></div>
<div class="a" style="left:285px;top:424px;width:724px;height:1px;background:#a0a0a0"></div>
<div class="a" style="left:285px;top:425px;width:724px;height:19px;background:#e0e0e0"></div>
<div class="a" style="left:339px;top:425px;width:121px;height:19px;background:#ffff00"></div><div class="a" style="left:285px;top:425px;width:53px;height:19px;background:#fff"></div>
<div class="a" style="left:285px;top:444px;width:724px;height:1px;background:#a0a0a0"></div>
<div class="a" style="left:338px;top:347px;width:1px;height:98px;background:#a0a0a0"></div>
<div class="a" style="left:460px;top:347px;width:1px;height:98px;background:#a0a0a0"></div>
<div class="a" style="left:527px;top:347px;width:1px;height:98px;background:#a0a0a0"></div>
<div class="a" style="left:615px;top:347px;width:1px;height:98px;background:#a0a0a0"></div>
<div class="a" style="left:703px;top:347px;width:1px;height:98px;background:#a0a0a0"></div>
<div class="a" style="left:765px;top:347px;width:1px;height:98px;background:#a0a0a0"></div>
<div class="a" style="left:850px;top:347px;width:1px;height:98px;background:#a0a0a0"></div>
<div class="a" style="left:889px;top:347px;width:1px;height:98px;background:#a0a0a0"></div>
<div class="a" style="left:956px;top:347px;width:1px;height:98px;background:#a0a0a0"></div>
<div class="g" style="left:291px;top:366px;font-weight:bold">Line</div><div class="g" style="left:327px;top:366px;font-weight:bold">v</div>
<div class="g" style="left:344px;top:366px">Description</div>
<div class="g" style="left:465px;top:349px">Member/<br>Tenant</div>
<div class="g" style="left:532px;top:366px">Name</div>
<div class="g" style="left:620px;top:366px">Related To</div>
<div class="g" style="left:708px;top:366px">Relation</div>
<div class="g" style="left:771px;top:366px">Birth Date</div>
<div class="g" style="left:856px;top:366px">Age</div>
<div class="g" style="left:895px;top:349px">Full-time<br>Student</div>
<div class="a" style="left:956px;top:347px;width:53px;height:38px;overflow:hidden"><div class="g" style="left:5px;top:2px">Paid Child<br>Support</div></div>
<div class="g" style="left:287px;top:387px">1</div>
<div class="g" style="left:340px;top:387px">Head of Household</div>
<div class="g" style="left:461px;top:387px">yes</div>
<div class="g" style="left:527px;top:387px">James Smith</div>
<div class="g" style="left:616px;top:387px">none</div>
<div class="g" style="left:704px;top:387px">none</div>
<div class="g" style="left:767px;top:387px">24 Aug 1971</div>
<div class="g" style="left:851px;top:387px;width:34px;text-align:right">46</div>
<div class="g" style="left:287px;top:407px">2</div>
<div class="g" style="left:461px;top:407px">yes</div>
<div class="g" style="left:527px;top:407px">Jane Smith</div>
<div class="g" style="left:616px;top:407px">James Smith</div>
<div class="g" style="left:704px;top:407px">spouse</div>
<div class="g" style="left:767px;top:407px">14 Aug 1975</div>
<div class="g" style="left:851px;top:407px;width:34px;text-align:right">42</div>
<div class="g" style="left:287px;top:427px">3</div>
<div class="g" style="left:461px;top:427px">yes</div>
<div class="g" style="left:527px;top:427px">Jake Smith</div>
<div class="g" style="left:616px;top:427px">James Smith</div>
<div class="g" style="left:704px;top:427px">child</div>
<div class="g" style="left:767px;top:427px">16 Aug 2005</div>
<div class="g" style="left:851px;top:427px;width:34px;text-align:right">12</div>
<div class="g" style="left:891px;top:427px">student</div>

<div class="a" style="left:285px;top:688px;width:724px;height:16px;background:linear-gradient(#e6e6e6,#f2f2f2 30%,#f2f2f2 70%,#e8e8e8)"></div><div class="a" style="left:291px;top:692px;width:0;height:0;border-top:4px solid transparent;border-bottom:4px solid transparent;border-right:4px solid #3a3a3a"></div><div class="a" style="left:999px;top:692px;width:0;height:0;border-top:4px solid transparent;border-bottom:4px solid transparent;border-left:4px solid #3a3a3a"></div><div class="a" style="left:304px;top:688px;width:580px;height:16px;border:1px solid #979797;border-radius:3px;background:linear-gradient(#f6f6f6,#eaeaea 50%,#d9d9d9 51%,#cfcfcf)"></div><div class="a" style="left:590px;top:692px;width:2px;height:8px;background:linear-gradient(90deg,#303030,#909090)"></div><div class="a" style="left:593px;top:692px;width:2px;height:8px;background:linear-gradient(90deg,#303030,#909090)"></div><div class="a" style="left:596px;top:692px;width:2px;height:8px;background:linear-gradient(90deg,#303030,#909090)"></div>
<div class="a" style="left:395px;top:483px;width:347px;height:119px;border-radius:7px;box-shadow:3px 4px 8px 2px rgba(0,0,0,0.62)"></div>
<div class="a" style="left:395px;top:483px;width:347px;height:119px;border:1px solid #383c44;border-radius:7px;background:radial-gradient(ellipse 110px 15px at 95px 18px,rgba(236,243,250,0.95),rgba(236,243,250,0.6) 60%,rgba(236,243,250,0) 100%),linear-gradient(100deg,#c6daee,#bcd3eb 45%,#c8dbef 75%,#b4cde8)"></div>
<div class="a" style="left:396px;top:484px;width:345px;height:117px;border:1px solid rgba(255,255,255,0.7);border-radius:6px"></div>
<svg class="a" style="left:404px;top:490px" width="15" height="15" viewBox="0 0 15 15" shape-rendering="crispEdges">
<rect x="0" y="3" width="15" height="10" fill="#000"/><rect x="5" y="1" width="10" height="13" fill="#000"/><rect x="9" y="0" width="6" height="15" fill="#000"/>
<rect x="1" y="4" width="5" height="3" fill="#0ff"/><rect x="1" y="8" width="5" height="4" fill="#0ff"/>
<rect x="6" y="2" width="3" height="4" fill="#0ff"/><rect x="6" y="9" width="3" height="4" fill="#0ff"/>
<rect x="10" y="1" width="4" height="4" fill="#0ff"/><rect x="10" y="6" width="4" height="3" fill="#0ff"/><rect x="10" y="10" width="4" height="4" fill="#0ff"/>
</svg>
<div class="t" style="left:424px;top:491px;font-size:12px;line-height:14px;color:#000">Confirm Item Delete</div>
<div class="a" style="left:632px;top:484px;width:103px;height:19px;border:1px solid #6a7888;border-top:none;border-radius:0 0 5px 5px;background:linear-gradient(#e6eef6,#cbd8e6 50%,#b8c8da 51%,#c8d6e4)"></div>
<div class="a" style="left:687px;top:484px;width:48px;height:19px;border:1px solid #6a3030;border-top:none;border-radius:0 0 5px 0;background:linear-gradient(#e8a090,#d05a40 50%,#c03a20 51%,#d87060)"></div>
<div class="a" style="left:660px;top:484px;width:1px;height:18px;background:#8a98a8"></div>
<div class="a" style="left:641px;top:493px;width:12px;height:5px;background:#f4f6f8;border:1px solid #3c4450;border-radius:1px"></div>
<div class="a" style="left:668px;top:488px;width:12px;height:10px;background:#f4f6f8;border:1px solid #3c4450;border-radius:1px"></div>
<div class="a" style="left:671px;top:491px;width:6px;height:4px;border:1px solid #3c4450"></div>
<svg class="a" style="left:705px;top:487px" width="13" height="11" viewBox="0 0 13 11"><path d="M2,1.5 L11,9.5 M11,1.5 L2,9.5" stroke="#4a3030" stroke-width="3.8" stroke-linecap="round"/><path d="M2,1.5 L11,9.5 M11,1.5 L2,9.5" stroke="#fff" stroke-width="1.8" stroke-linecap="round"/></svg>
<div class="a" style="left:402px;top:512px;width:333px;height:82px;background:#f0f0f0;border:1px solid #6f7f90;border-bottom-color:#fff;border-right-color:#fff"></div>
<svg class="a" style="left:407px;top:518px" width="36" height="36" viewBox="0 0 36 36"><ellipse cx="19" cy="15" rx="15" ry="12" fill="#808080"/><path d="M16,24 L22,33 L24,25 Z" fill="#808080"/><path d="M12.5,23.5 L20.5,31 L21,24.5" fill="#fff" stroke="#000" stroke-width="1"/><ellipse cx="17.3" cy="12.8" rx="15" ry="11.8" fill="#fff" stroke="#000" stroke-width="1"/><path d="M13.5,23 L20.5,29.5 L20.5,23.5 Z" fill="#fff"/><text x="17" y="21" font-family="Liberation Sans" font-weight="bold" font-size="20" fill="#0000ee" text-anchor="middle">?</text></svg>
<div class="t" style="left:453px;top:527px;font-size:14px;letter-spacing:-0.42px;line-height:16px;color:#000">OK to delete "Jake Smith" from the database?</div>
<div class="a" style="left:457px;top:561px;width:128px;height:29px;background:#f0f0f0;border:1px solid;border-color:#fff #404040 #404040 #fff;box-shadow:inset -1px -1px 0 #a0a0a0"></div><div class="a" style="left:460px;top:564px;width:122px;height:23px;border:1px dotted #000"></div><div class="t" style="left:457px;top:569px;width:128px;text-align:center;font-size:12px;line-height:14px;letter-spacing:-0.4px;color:#000">Delete Tenant Item</div>
<div class="a" style="left:593px;top:561px;width:70px;height:29px;background:#f0f0f0;border:1px solid;border-color:#fff #404040 #404040 #fff;box-shadow:inset -1px -1px 0 #a0a0a0"></div><div class="t" style="left:593px;top:569px;width:70px;text-align:center;font-size:12px;line-height:14px;letter-spacing:-0.4px;color:#000">Cancel</div>
<div class="a" style="left:671px;top:561px;width:59px;height:29px;background:#f0f0f0;border:1px solid;border-color:#fff #404040 #404040 #fff;box-shadow:inset -1px -1px 0 #a0a0a0"></div><div class="t" style="left:671px;top:569px;width:59px;text-align:center;font-size:12px;line-height:14px;letter-spacing:-0.4px;color:#000">Help</div>
<svg class="a" style="left:527px;top:570px" width="13" height="20" viewBox="0 0 13 20"><path d="M0.5,0.5 V16 L4,12.5 L6.5,18.5 L9,17.5 L6.5,11.5 H11.5 Z" fill="#fff" stroke="#000" stroke-linejoin="round"/></svg>
<svg class="a" style="left:0;top:0" width="1020" height="716" viewBox="0 0 1020 716">
<ellipse cx="326.5" cy="337" rx="37" ry="11" fill="none" stroke="#ff0000" stroke-width="2.2"/>
<rect x="284.5" y="424.5" width="724" height="21" fill="none" stroke="#ff0000" stroke-width="2.2"/>
<path d="M299,433 C220,435 152,440 152.5,453 C153,466 190,478 246,499.5 L414,561" fill="none" stroke="#ff0000" stroke-width="3"/>
<path d="M308.5,432.5 L293.5,425.5 L298.5,433 L294,441 Z" fill="#ff0000"/>
<path d="M426.5,565 L414.5,555 L413,562 L410.5,569.5 Z" fill="#ff0000"/>
</svg>
</body></html>
